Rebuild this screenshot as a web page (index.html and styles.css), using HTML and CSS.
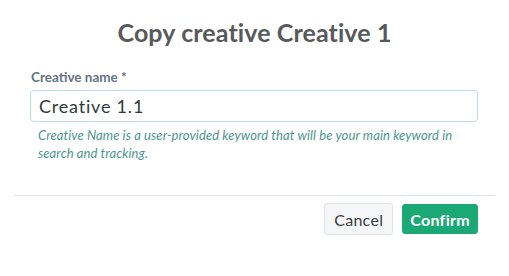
FILE: index.html
```html
<!DOCTYPE html>
<html lang="en">
<head>
  <meta charset="UTF-8" />
  <title>Copy creative</title>
  <link rel="stylesheet" href="styles.css">
</head>
<body>
  <div class="modal">
    <h2 class="modal-title">Copy creative Creative 1</h2>

    <div class="modal-body">
      <label class="field-label" for="name">Creative name *</label>
      <input class="field-input" type="text" id="name" value="Creative 1.1" />
      <p class="field-help">Creative Name is a user-provided keyword that will be your main keyword in search and tracking.</p>
    </div>

    <div class="modal-footer">
      <button class="btn btn-cancel">Cancel</button>
      <button class="btn btn-confirm">Confirm</button>
    </div>
  </div>
</body>
</html>
```

FILE: styles.css
```css
body {
  margin: 0;
  background: #fff;
  font-family: Lato, "Noto Sans", sans-serif;
}
.modal {
  width: 509px;
  height: 276px;
  box-sizing: border-box;
}
.modal-title {
  margin: 0;
  padding-top: 18px;
  text-align: center;
  font-size: 25px;
  font-weight: bold;
  line-height: 29px;
  letter-spacing: 0.1px;
  color: #58595b;
}
.modal-body {
  padding: 22px 31px 0 30px;
}
.field-label {
  display: block;
  font-size: 13.5px;
  font-weight: bold;
  color: #657385;
  line-height: 16px;
  margin-bottom: 5px;
  padding-left: 1px;
}
.field-input {
  display: block;
  width: 100%;
  box-sizing: border-box;
  height: 32px;
  padding: 0 8px;
  border: 1px solid #b9dcec;
  border-radius: 4px;
  font-family: inherit;
  font-size: 18px;
  letter-spacing: 0.8px;
  color: #2e3b3c;
  outline: none;
}
.field-help {
  margin: 4px 0 0 8px;
  font-size: 13px;
  font-style: italic;
  line-height: 18px;
  letter-spacing: 0.1px;
  color: #4b968e;
}
.modal-footer {
  margin: 33px 14px 0;
  border-top: 1px solid #e2e3e5;
  padding: 7px 17px 0 0;
  display: flex;
  justify-content: flex-end;
  align-items: center;
  gap: 9px;
}
.btn {
  font-family: inherit;
  font-size: 16px;
  letter-spacing: 0.3px;
  border-radius: 3px;
}
.btn-cancel {
  height: 32px;
  padding: 0 9px;
  background: #f5f6f8;
  border: 1px solid #e1e3e6;
  color: #3a3d42;
}
.btn-confirm {
  height: 30px;
  padding: 0 7px;
  background: #1aa974;
  border: 1px solid #1aa974;
  color: #fff;
  font-weight: bold;
}
```
